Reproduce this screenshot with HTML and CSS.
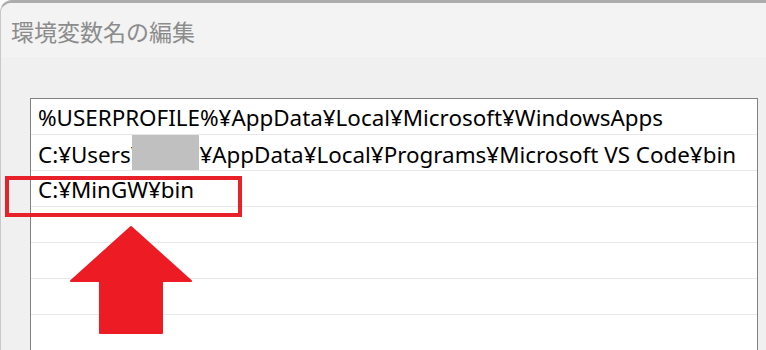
FILE: index.html
```html
<!DOCTYPE html>
<html lang="ja">
<head>
    <meta charset="UTF-8">
    <title>環境変数名の編集</title>
    <link rel="stylesheet" href="styles.css">
</head>
<body>

<div class="window">
    <div class="titlebar">環境変数名の編集</div>
    <div class="content">
        <ul class="pathlist">
            <li>%USERPROFILE%¥AppData¥Local¥Microsoft¥WindowsApps</li>
            <li>C:¥Users¥<span class="redact"></span>¥AppData¥Local¥Programs¥Microsoft VS Code¥bin</li>
            <li>C:¥MinGW¥bin</li>
            <li></li>
            <li></li>
            <li></li>
            <li></li>
        </ul>
    </div>
</div>

<!-- annotation -->
<div class="mark"></div>
<svg class="arrow" width="130" height="115" viewBox="0 0 130 115">
    <polygon points="61,2 121,56 92,56 92,108 30,108 30,56 1,56" fill="#ed1c24" stroke="#ed1c24" stroke-width="2" stroke-linejoin="round"/>
</svg>

</body>
</html>
```

FILE: styles.css
```css
body {
    margin: 0;
    width: 766px;
    height: 350px;
    overflow: hidden;
    background-color: #fbfbfb;
    position: relative;
    font-family: "Noto Sans", "Noto Sans CJK JP", sans-serif;
}

.window {
    height: 347px;
    background-color: #f0f0f0;
    border-top: 3px solid #acacac;
    border-left: 1px solid #c8c8c8;
    border-top-left-radius: 12px;
}

.titlebar {
    height: 54px;
    padding-left: 10px;
    background-color: #f3f3f3;
    border-top-left-radius: 10px;
    color: #8c8c8c;
    font-family: "Noto Sans CJK JP", sans-serif;
    font-size: 23px;
    line-height: 56px;
}

.content {
    padding: 41px 8px 0 29px;
}

.pathlist {
    list-style: none;
    margin: 0;
    padding: 0;
    background-color: #fff;
    border: 1px solid #828282;
    border-bottom: none;
}

.pathlist li {
    height: 35px;
    border-bottom: 1px solid #e8e8e8;
    padding-left: 7px;
    color: #000;
    font-size: 22.4px;
    line-height: 37px;
    white-space: nowrap;
    overflow: hidden;
}

.redact {
    display: inline-block;
    width: 67px;
    height: 43px;
    margin-left: -11px;
    margin-right: 0;
    vertical-align: middle;
    background-color: #c0c0c0;
}

.mark {
    position: absolute;
    left: 5px;
    top: 176px;
    width: 229px;
    height: 33px;
    border: 4px solid #e8202a;
}

.arrow {
    position: absolute;
    left: 70px;
    top: 225px;
}
```
